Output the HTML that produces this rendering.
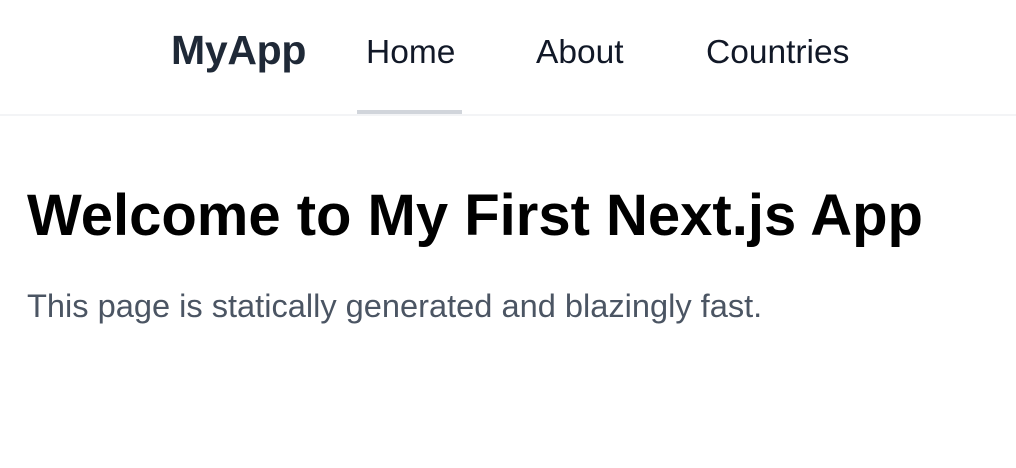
<!DOCTYPE html>
<html><head><style>
html,body{margin:0;padding:0;width:1016px;height:468px;background:#fff;overflow:hidden;font-family:"Liberation Sans",Arial,sans-serif}
.t{position:absolute;white-space:nowrap;line-height:1}
.hdr{position:absolute;left:0;top:0;width:1016px;height:114px;border-bottom:2px solid #f3f4f6}
.ul{position:absolute;left:357px;top:110px;width:105px;height:4px;background:#d1d5db}
</style></head><body>
<div class="hdr"></div>
<div class="ul"></div>
<div class="t" style="left:171px;top:30px;font-size:41px;font-weight:bold;color:#1f2937;letter-spacing:-0.3px">MyApp</div>
<div class="t" style="left:366px;top:36px;font-size:33.5px;color:#111827">Home</div>
<div class="t" style="left:536px;top:36px;font-size:33.5px;color:#111827">About</div>
<div class="t" style="left:706px;top:36px;font-size:33.5px;color:#111827">Countries</div>
<div class="t" style="left:27px;top:187px;font-size:58px;font-weight:bold;color:#000;letter-spacing:0px">Welcome to My First Next.js App</div>
<div class="t" style="left:27px;top:290px;font-size:32.6px;color:#4b5563">This page is statically generated and blazingly fast.</div>
</body></html>
